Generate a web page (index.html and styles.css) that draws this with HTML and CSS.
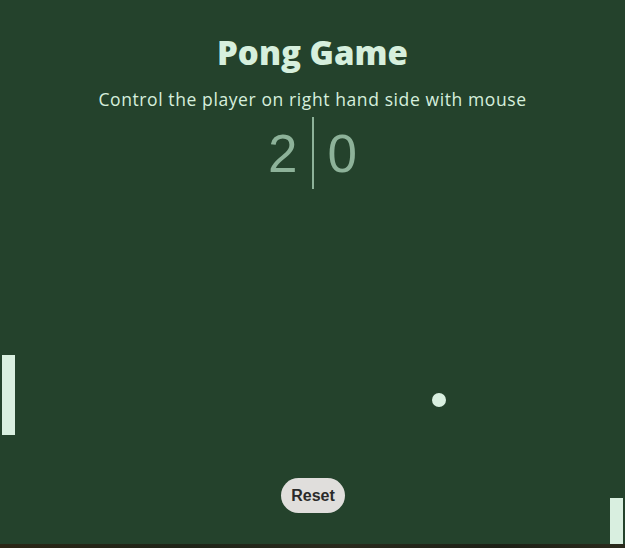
FILE: index.html
```html
<!DOCTYPE html>
<html lang="en">
<head>
<meta charset="utf-8">
<title>Pong Game</title>
<link rel="stylesheet" href="styles.css">
</head>
<body>
<main class="game">
  <header class="head">
    <h1 class="title">Pong Game</h1>
    <p class="subtitle">Control the player on right hand side with mouse</p>
    <div class="score">
      <span class="score-num score-left">2</span>
      <span class="score-divider"></span>
      <span class="score-num score-right">0</span>
    </div>
  </header>
  <div class="paddle paddle-left"></div>
  <div class="paddle paddle-right"></div>
  <div class="ball"></div>
  <button class="reset" type="button">Reset</button>
</main>
</body>
</html>
```
FILE: styles.css
```css
* { box-sizing: border-box; }
html, body { margin: 0; padding: 0; }
html { overflow: hidden; height: 548px; }
body {
  width: 625px;
  height: 548px;
  overflow: hidden;
  background: linear-gradient(90deg, #2b2616 0%, #1f2418 30%, #2a2a1d 55%, #1d2016 80%, #2b2a1c 100%);
}
.game {
  position: relative;
  height: 544px;
  overflow: hidden;
  background: #24422c;
  display: flex;
  flex-direction: column;
  align-items: center;
}
.head {
  display: flex;
  flex-direction: column;
  align-items: center;
  padding-top: 31px;
}
.title {
  margin: 0;
  font-family: "Open Sans", sans-serif;
  font-weight: 800;
  font-size: 33px;
  line-height: 44px;
  color: #d6efdd;
}
.subtitle {
  margin: 12px 0 0;
  font-family: "Open Sans", sans-serif;
  font-size: 17.5px;
  letter-spacing: 0.6px;
  line-height: 24px;
  color: #d6efdd;
}
.score {
  margin-top: 6px;
  display: flex;
  align-items: center;
  gap: 14px;
  height: 72px;
}
.score-num {
  font-family: "Liberation Sans", Arial, sans-serif;
  font-size: 53px;
  color: #8db299;
  line-height: 1;
}
.score-divider {
  width: 2px;
  height: 72px;
  background: #8db299;
}
.paddle {
  position: absolute;
  width: 13px;
  height: 80px;
  background: #d9efe0;
}
.paddle-left { left: 2px; top: 355px; }
.paddle-right { left: 610px; top: 498px; }
.ball {
  position: absolute;
  left: 432px;
  top: 393px;
  width: 14px;
  height: 14px;
  border-radius: 50%;
  background: #d9efe0;
}
.reset {
  position: absolute;
  left: 281px;
  top: 478px;
  width: 64px;
  height: 35px;
  border: none;
  border-radius: 18px;
  background: #e0dedc;
  color: #2a2a2a;
  font-family: "Liberation Sans", Arial, sans-serif;
  font-weight: 700;
  font-size: 16px;
  padding: 0;
}
```
